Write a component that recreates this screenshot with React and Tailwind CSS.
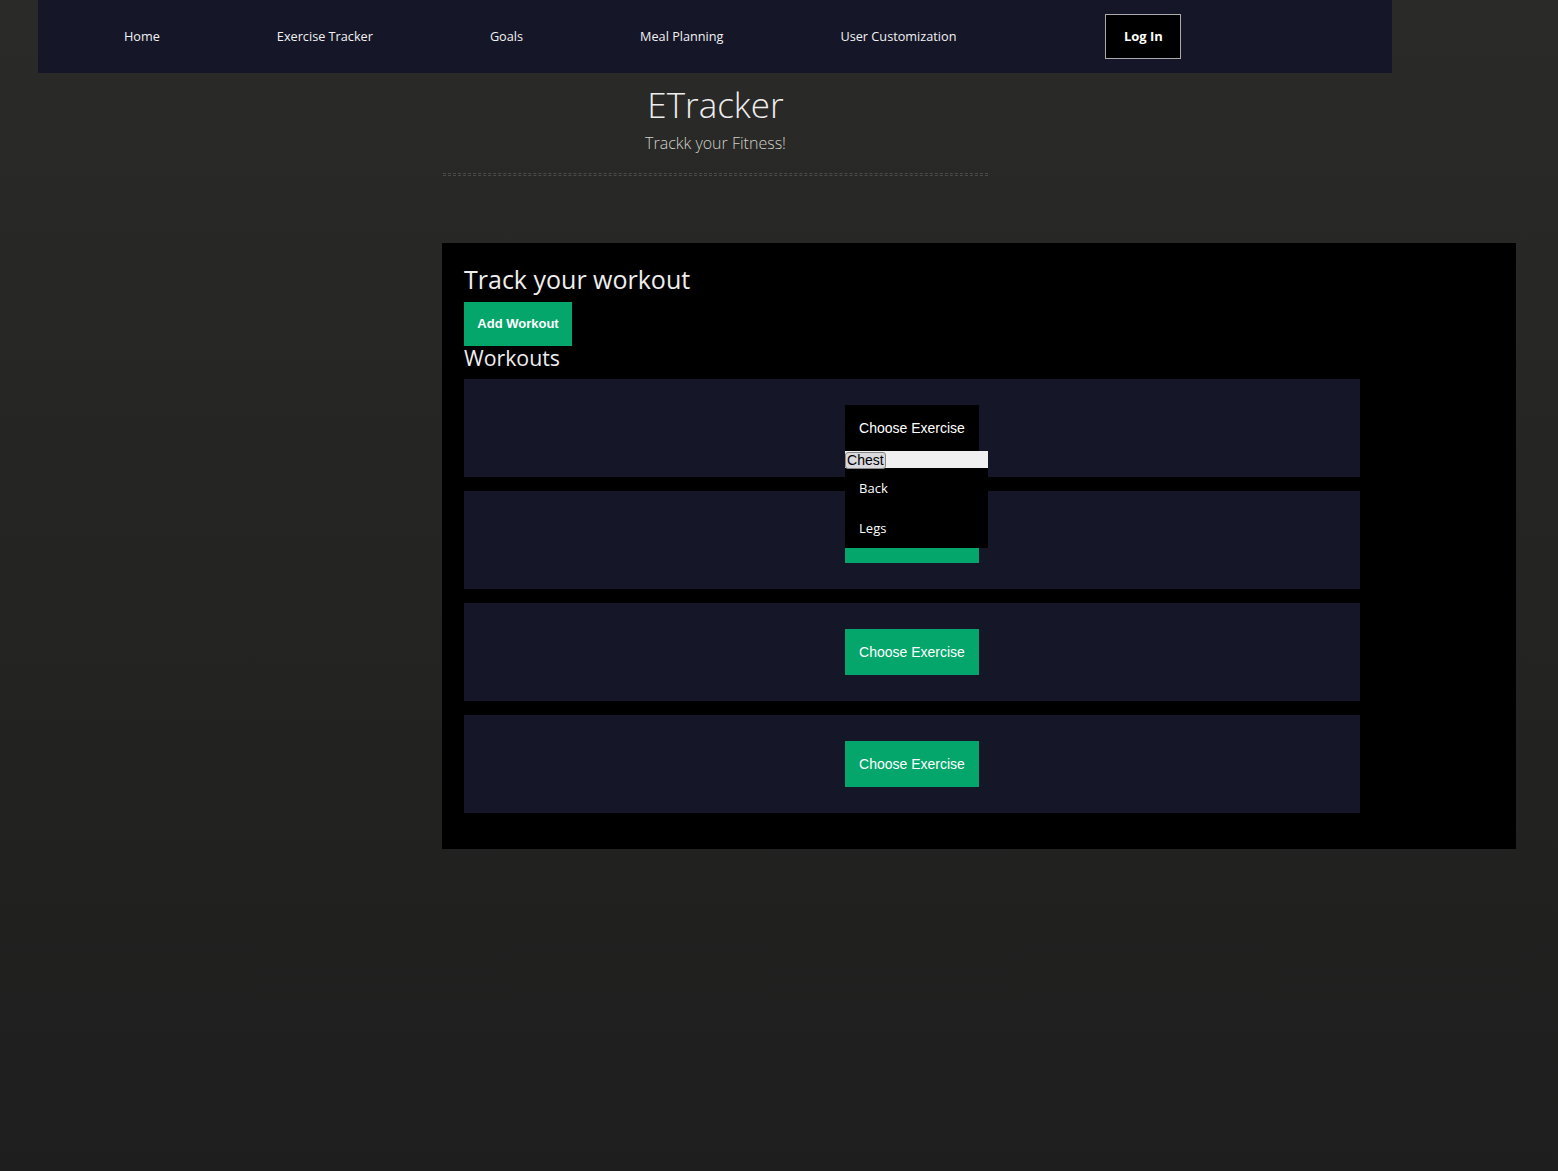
import React from 'react';

const navLinks = ['Home', 'Exercise Tracker', 'Goals', 'Meal Planning', 'User Customization'];

function ChooseButton({ open }) {
  return (
    <button
      className={`h-[46px] px-[14px] text-[14px] text-white font-['Liberation_Sans',Arial,sans-serif] ${
        open ? 'bg-black' : 'bg-[#04a66b]'
      }`}
    >
      Choose Exercise
    </button>
  );
}

export default function App() {
  const workouts = [1, 2, 3, 4];

  return (
    <div className="min-h-[1171px] bg-gradient-to-b from-[#2a2a28] to-[#1e1e1e] font-['Open_Sans',sans-serif] text-white">
      {/* top nav */}
      <nav className="ml-[38px] w-[1354px] h-[73px] bg-[#151628] flex items-center pl-[86px] gap-[117px] text-[12.7px]">
        {navLinks.map((l) => (
          <a key={l} className="text-[#f2f2f2] whitespace-nowrap pt-[1px]">
            {l}
          </a>
        ))}
        <button className="ml-[32px] w-[76px] h-[45px] bg-black border border-[#aaa] font-bold text-[13px]">
          Log In
        </button>
      </nav>

      {/* header */}
      <header className="ml-[443px] w-[545px] text-center pt-[6px]">
        <h1 className="text-[35px] leading-[52px] font-light text-[#eee]">ETracker</h1>
        <p className="text-[16px] leading-[22px] font-light text-[#d0d0c8] mt-[1px]">Trackk your Fitness!</p>
        <div className="mt-[19px] h-[3px] border-t border-b border-dashed border-[#4a4a48]" />
      </header>

      {/* workout panel */}
      <section className="ml-[442px] mt-[67px] w-[1074px] bg-black pt-[20px] pl-[22px] pb-[36px]">
        <h2 className="text-[25px] leading-[32px] text-[#eee]">Track your workout</h2>
        <button className="mt-[7px] h-[44px] w-[108px] bg-[#04a66b] text-white font-bold text-[13px] font-['Liberation_Sans',Arial,sans-serif]">
          Add Workout
        </button>
        <h3 className="text-[21.3px] leading-[24px] text-[#eee]">Workouts</h3>

        <div className="mt-[9px] flex flex-col gap-[14px] w-[896px]">
          {workouts.map((w, i) => (
            <div key={w} className="h-[98px] bg-[#151628] flex items-center justify-center">
              <div className="relative">
                <ChooseButton open={i === 0} />
                {i === 0 && (
                  <div className="absolute left-0 top-[46px] w-[143px] bg-black z-10 text-[13px]">
                    <div className="h-[17px] bg-[#f0f0f0] flex items-center pt-[1px]">
                      <span className="px-[1px] leading-[15px] border border-[#888] rounded-[3px] bg-[#d9d9de] text-black text-[14px] font-['Liberation_Sans',Arial,sans-serif]">
                        Chest
                      </span>
                    </div>
                    <div className="h-[40px] flex items-center pl-[14px] pt-[1px]">Back</div>
                    <div className="h-[40px] flex items-center pl-[14px] pt-[1px]">Legs</div>
                  </div>
                )}
              </div>
            </div>
          ))}
        </div>
      </section>
    </div>
  );
}
